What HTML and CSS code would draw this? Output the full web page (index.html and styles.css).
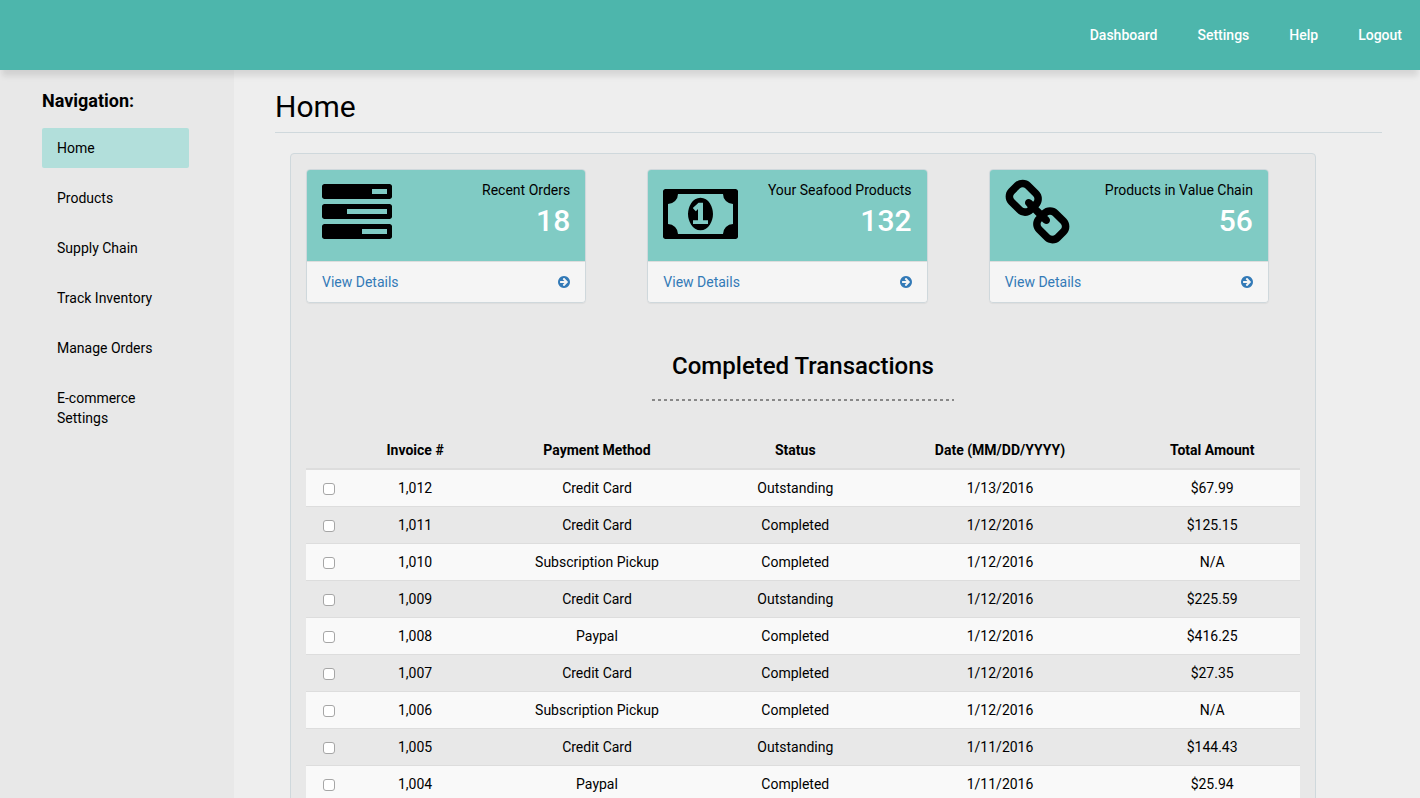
FILE: index.html
```html
<!DOCTYPE html>
<html lang="en">
<head>
<meta charset="utf-8">
<meta name="viewport" content="width=device-width, initial-scale=1">
<title>Home</title>
<link rel="stylesheet" href="styles.css">
</head>
<body>
<header class="topbar">
  <nav class="topnav" aria-label="Account">
    <a href="#">Dashboard</a>
    <a href="#">Settings</a>
    <a href="#">Help</a>
    <a href="#">Logout</a>
  </nav>
</header>
<div class="layout">
  <aside class="sidebar">
    <h2 class="sidebar-title">Navigation:</h2>
    <nav class="sidenav" aria-label="Sections">
      <a href="#" class="active" aria-current="page">Home</a>
      <a href="#">Products</a>
      <a href="#">Supply Chain</a>
      <a href="#">Track Inventory</a>
      <a href="#">Manage Orders</a>
      <a href="#">E-commerce Settings</a>
    </nav>
  </aside>
  <main class="content">
    <h1 class="page-title">Home</h1>
    <section class="panel">
      <div class="cards">
        <article class="card">
          <div class="card-head">
            <svg class="card-icon" width="70" height="70" viewBox="0 0 1792 1792" aria-hidden="true"><path d="M1024 1408h640v-128h-640v128zm-384-512h1024v-128h-1024v128zm640-512h384v-128h-384v128zm512 832v256q0 26-19 45t-45 19h-1664q-26 0-45-19t-19-45v-256q0-26 19-45t45-19h1664q26 0 45 19t19 45zm0-512v256q0 26-19 45t-45 19h-1664q-26 0-45-19t-19-45v-256q0-26 19-45t45-19h1664q26 0 45 19t19 45zm0-512v256q0 26-19 45t-45 19h-1664q-26 0-45-19t-19-45v-256q0-26 19-45t45-19h1664q26 0 45 19t19 45z"/></svg>
            <div class="card-info">
              <div>Recent Orders</div>
              <div class="card-number">18</div>
            </div>
          </div>
          <a href="#" class="card-foot">View Details
            <svg width="12" height="12" viewBox="128 128 1536 1536" aria-hidden="true"><use href="#arrow"/></svg>
          </a>
        </article>
        <article class="card">
          <div class="card-head">
            <svg class="card-icon" width="75" height="70" viewBox="0 0 1920 1792" aria-hidden="true"><path d="M768 1152h384v-96h-128v-448h-114l-148 137 77 80q42-37 55-57h2v288h-128v96zm512-256q0 70-21 142t-59.500 134-101.500 101-138 39-138-39-101.500-101-59.500-134-21-142 21-142 59.500-134 101.500-101 138-39 138 39 101.500 101 59.500 134 21 142zm512 256v-512q-106 0-181-75t-75-181h-1152q0 106-75 181t-181 75v512q106 0 181 75t75 181h1152q0-106 75-181t181-75zm128-832v1152q0 26-19 45t-45 19h-1792q-26 0-45-19t-19-45v-1152q0-26 19-45t45-19h1792q26 0 45 19t19 45z"/></svg>
            <div class="card-info">
              <div>Your Seafood Products</div>
              <div class="card-number">132</div>
            </div>
          </div>
          <a href="#" class="card-foot">View Details
            <svg width="12" height="12" viewBox="128 128 1536 1536" aria-hidden="true"><use href="#arrow"/></svg>
          </a>
        </article>
        <article class="card">
          <div class="card-head">
            <svg class="card-icon" width="65" height="70" viewBox="64 0 1664 1792" aria-hidden="true"><path d="M1520 1216q0-40-28-68l-208-208q-28-28-68-28-42 0-72 32 3 3 19 18.500t21.500 21.500 15 19 13 25.500 3.500 27.500q0 40-28 68t-68 28q-15 0-27.500-3.500t-25.500-13-19-15-21.500-21.500-18.500-19q-33 31-33 73 0 40 28 68l206 207q27 27 68 27 40 0 68-26l147-146q28-28 28-67zm-703-705q0-40-28-68l-206-207q-28-28-68-28-39 0-68 27l-147 146q-28 28-28 67 0 40 28 68l208 208q27 27 68 27 42 0 72-31-3-3-19-18.500t-21.500-21.500-15-19-13-25.500-3.500-27.500q0-40 28-68t68-28q15 0 27.500 3.500t25.500 13 19 15 21.500 21.500 18.500 19q33-31 33-73zm895 705q0 120-85 203l-147 146q-83 83-203 83-121 0-204-85l-206-207q-83-83-83-203 0-123 88-209l-88-88q-86 88-208 88-120 0-204-84l-208-208q-84-84-84-204t85-203l147-146q83-83 203-83 121 0 204 85l206 207q83 83 83 203 0 123-88 209l88 88q86-88 208-88 120 0 204 84l208 208q84 84 84 204z"/></svg>
            <div class="card-info">
              <div>Products in Value Chain</div>
              <div class="card-number">56</div>
            </div>
          </div>
          <a href="#" class="card-foot">View Details
            <svg width="12" height="12" viewBox="128 128 1536 1536" aria-hidden="true"><path id="arrow" d="M1413 896q0-27-18-45l-91-91-362-362q-18-18-45-18t-45 18l-91 91q-18 18-18 45t18 45l189 189h-502q-26 0-45 19t-19 45v128q0 26 19 45t45 19h502l-189 189q-19 19-19 45t19 45l91 91q18 18 45 18t45-18l362-362 91-91q18-18 18-45zm251 0q0 209-103 385.500t-279.500 279.500-385.500 103-385.500-103-279.500-279.500-103-385.500 103-385.500 279.500-279.500 385.500-103 385.500 103 279.500 279.500 103 385.500z"/></svg>
          </a>
        </article>
      </div>
      <h2 class="section-title">Completed Transactions</h2>
      <table class="orders">
        <colgroup><col class="c-check"><col class="c-invoice"><col class="c-method"><col class="c-status"><col class="c-date"><col class="c-total"></colgroup>
        <thead>
          <tr><td></td><th scope="col">Invoice #</th><th scope="col">Payment Method</th><th scope="col">Status</th><th scope="col">Date (MM/DD/YYYY)</th><th scope="col">Total Amount</th></tr>
        </thead>
        <tbody>
          <tr><td><input type="checkbox" aria-label="Select invoice 1,012"></td><td>1,012</td><td>Credit Card</td><td>Outstanding</td><td>1/13/2016</td><td>$67.99</td></tr>
          <tr><td><input type="checkbox" aria-label="Select invoice 1,011"></td><td>1,011</td><td>Credit Card</td><td>Completed</td><td>1/12/2016</td><td>$125.15</td></tr>
          <tr><td><input type="checkbox" aria-label="Select invoice 1,010"></td><td>1,010</td><td>Subscription Pickup</td><td>Completed</td><td>1/12/2016</td><td>N/A</td></tr>
          <tr><td><input type="checkbox" aria-label="Select invoice 1,009"></td><td>1,009</td><td>Credit Card</td><td>Outstanding</td><td>1/12/2016</td><td>$225.59</td></tr>
          <tr><td><input type="checkbox" aria-label="Select invoice 1,008"></td><td>1,008</td><td>Paypal</td><td>Completed</td><td>1/12/2016</td><td>$416.25</td></tr>
          <tr><td><input type="checkbox" aria-label="Select invoice 1,007"></td><td>1,007</td><td>Credit Card</td><td>Completed</td><td>1/12/2016</td><td>$27.35</td></tr>
          <tr><td><input type="checkbox" aria-label="Select invoice 1,006"></td><td>1,006</td><td>Subscription Pickup</td><td>Completed</td><td>1/12/2016</td><td>N/A</td></tr>
          <tr><td><input type="checkbox" aria-label="Select invoice 1,005"></td><td>1,005</td><td>Credit Card</td><td>Outstanding</td><td>1/11/2016</td><td>$144.43</td></tr>
          <tr><td><input type="checkbox" aria-label="Select invoice 1,004"></td><td>1,004</td><td>Paypal</td><td>Completed</td><td>1/11/2016</td><td>$25.94</td></tr>
        </tbody>
      </table>
    </section>
  </main>
</div>
</body>
</html>
```
FILE: styles.css
```css
* { box-sizing: border-box; }

html { scrollbar-width: none; }

body {
  margin: 0;
  min-height: 100vh;
  display: flex;
  flex-direction: column;
  background: #eee;
  color: #000;
  font: 14px/20px Roboto, "Liberation Sans", sans-serif;
}

a { text-decoration: none; }

.topbar {
  position: relative;
  z-index: 1;
  display: flex;
  justify-content: flex-end;
  align-items: center;
  height: 70px;
  padding: 0 18px;
  background: #4db6ac;
  box-shadow: 0 8px 6px -2px rgba(0, 0, 0, .1);
}

.topnav { display: flex; gap: 40px; }

.topnav a { color: #fff; font-weight: 500; }

.layout { flex: 1; display: flex; }

.sidebar {
  flex: 0 0 234px;
  padding: 20px 45px 20px 42px;
  background: #e8e8e8;
}

.sidebar-title {
  margin: 0 0 17px;
  font-size: 18px;
  line-height: 21px;
  font-weight: 700;
}

.sidenav { display: flex; flex-direction: column; gap: 10px; }

.sidenav a {
  padding: 10px 15px;
  border-radius: 2px;
  color: #000;
}

.sidenav .active { background: #b2dfdb; }

.content { flex: 1; min-width: 0; padding: 20px 38px 0 41px; }

.page-title {
  margin: 0 0 20px;
  padding-bottom: 9px;
  border-bottom: 1px solid #cfd8dc;
  font-size: 30px;
  line-height: 33px;
  font-weight: 400;
}

.panel {
  margin: 0 66px 0 15px;
  padding: 15px 15px 0;
  background: #e8e8e8;
  border: 1px solid #cfd8dc;
  border-radius: 4px 4px 0 0;
}

.cards {
  display: grid;
  grid-template-columns: repeat(3, 1fr);
  column-gap: 30px;
}

.card {
  width: 90%;
  border: 1px solid #cfd8dc;
  border-radius: 4px;
  overflow: hidden;
  box-shadow: 0 1px 1px rgba(0, 0, 0, .05);
}

.card-head {
  display: flex;
  justify-content: space-between;
  height: 91px;
  padding: 9px 15px;
  background: #80cbc4;
}

.card-icon { flex: none; }

.card-info { padding-top: 1px; text-align: right; }

.card-number {
  color: #fff;
  font-size: 30px;
  line-height: 42px;
  font-weight: 500;
}

.card-foot {
  display: flex;
  justify-content: space-between;
  align-items: center;
  padding: 10px 15px;
  background: #f5f5f5;
  border-top: 1px solid #ddd;
  color: #337ab7;
}

.card-foot svg { fill: currentColor; }

.section-title {
  width: 302px;
  margin: 47px auto 31px;
  padding-bottom: 19px;
  background: repeating-linear-gradient(90deg, #888 0 3px, transparent 3px 6px) bottom / 100% 2px no-repeat;
  font-size: 24px;
  line-height: 32px;
  font-weight: 500;
  text-align: center;
}

.orders {
  width: 100%;
  table-layout: fixed;
  border-collapse: separate;
  border-spacing: 0;
  text-align: center;
}

.c-check { width: 45px; }
.c-invoice { width: 12.9%; }
.c-method { width: 23.7%; }
.c-status { width: 16.2%; }
.c-date { width: 25%; }

.orders th,
.orders td { padding: 8px; }

.orders th { font-weight: 700; }

.orders thead tr > * { border-bottom: 2px solid #ddd; }

.orders tbody tr + tr td { border-top: 1px solid #ddd; }

.orders tbody tr:nth-child(odd) { background: #f9f9f9; }

.orders input {
  appearance: none;
  display: block;
  width: 12px;
  height: 12px;
  margin: 2px auto 0;
  border: 1px solid #a6a6a6;
  border-radius: 3px;
  background: #fff;
}
```
